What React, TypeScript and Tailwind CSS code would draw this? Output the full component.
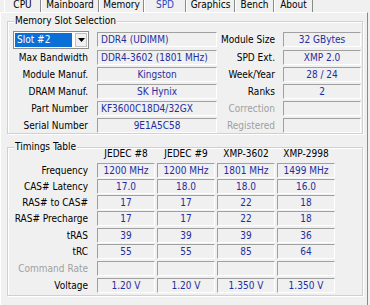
import React from "react";

const FONT = "font-['DejaVu_Sans_Condensed','DejaVu_Sans',sans-serif] text-[10px]";
const VAL = "text-[#1f2e9e]";

const tabs = [
  { name: "CPU", w: "w-[37px]" },
  { name: "Mainboard", w: "w-[58px]" },
  { name: "Memory", w: "w-[45px]" },
  { name: "SPD", w: "w-[42px]", active: true },
  { name: "Graphics", w: "w-[49px]" },
  { name: "Bench", w: "w-[39px]" },
  { name: "About", w: "w-[39px]" },
];

function Field({
  children,
  className = "",
  left = false,
}: {
  children?: React.ReactNode;
  className?: string;
  left?: boolean;
}) {
  return (
    <div
      className={`h-[15px] shrink-0 border border-t-[#a0a0a0] border-l-[#a0a0a0] border-b-white border-r-white leading-[13px] whitespace-nowrap overflow-hidden ${VAL} ${
        left ? "text-left pl-[3px]" : "text-center"
      } ${className}`}
    >
      {children}
    </div>
  );
}

function Group({
  title,
  className = "",
  children,
}: {
  title: string;
  className?: string;
  children: React.ReactNode;
}) {
  return (
    <div
      className={`relative w-[356px] border border-[#d0d0d0] shadow-[1px_1px_0_#fff,inset_1px_1px_0_#fff] ${className}`}
    >
      <span className="absolute left-[6px] -top-[7px] bg-[#f0f0f0] px-[1px] leading-[12px] text-black">
        {title}
      </span>
      {children}
    </div>
  );
}

const slotRows: [string, string, boolean, string, string, boolean][] = [
  ["Max Bandwidth", "DDR4-3602 (1801 MHz)", true, "SPD Ext.", "XMP 2.0", false],
  ["Module Manuf.", "Kingston", false, "Week/Year", "28 / 24", false],
  ["DRAM Manuf.", "SK Hynix", false, "Ranks", "2", false],
  ["Part Number", "KF3600C18D4/32GX", true, "Correction", "", true],
  ["Serial Number", "9E1A5C58", false, "Registered", "", true],
];

const timings: { label: string; vals: string[]; dim?: boolean; mt?: string }[] = [
  { label: "Frequency", vals: ["1200 MHz", "1200 MHz", "1801 MHz", "1499 MHz"] },
  { label: "CAS# Latency", vals: ["17.0", "18.0", "18.0", "16.0"] },
  { label: "RAS# to CAS#", vals: ["17", "17", "22", "18"] },
  { label: "RAS# Precharge", vals: ["17", "17", "22", "18"] },
  { label: "tRAS", vals: ["39", "39", "39", "36"], mt: "mt-[1px]" },
  { label: "tRC", vals: ["55", "55", "85", "64"] },
  { label: "Command Rate", vals: ["", "", "", ""], dim: true, mt: "mt-[1px]" },
  { label: "Voltage", vals: ["1.20 V", "1.20 V", "1.350 V", "1.350 V"], mt: "mt-[1px]" },
];

export default function App() {
  return (
    <div className={`w-[370px] h-[305px] overflow-hidden bg-[#f0f0f0] text-black ${FONT}`}>
      {/* tab strip */}
      <div className="flex h-[12px] overflow-hidden">
        <div className="w-[4px] shrink-0" />
        {tabs.map((t) => (
          <div
            key={t.name}
            className={`${t.w} shrink-0 h-[12px] leading-[10px] text-center border-l border-l-white border-r border-r-[#8a8a8a] ${
              t.active ? "text-[#2a48bf]" : ""
            }`}
          >
            {t.name}
          </div>
        ))}
      </div>

      {/* tab panel */}
      <div className="w-[368px] h-[293px] border-t border-t-white border-l border-l-white border-r border-r-[#8a8a8a] pl-[6px] pt-[8px]">
        <Group title="Memory Slot Selection">
          <div className="pt-[9px] flex flex-col">
            {/* first row */}
            <div className="flex items-start h-[18px]">
              <div className="ml-[5px] w-[76px] h-[18px] shrink-0 bg-white border border-[#8c8c8c] flex items-center p-[1px]">
                <div className="w-[57px] h-[14px] bg-[#0a6fd6] text-white leading-[14px] pl-[2px]">
                  Slot #2
                </div>
                <div className="ml-[3px] w-[12px] h-[14px] flex items-center justify-center border border-[#c0c0c0] bg-[#f0f0f0]">
                  <svg width="7" height="4" viewBox="0 0 7 4">
                    <path d="M0 0h7L3.5 4z" fill="#000" />
                  </svg>
                </div>
              </div>
              <Field left className="ml-[8px] mt-[1px] w-[120px]">
                DDR4 (UDIMM)
              </Field>
              <div className="w-[58px] shrink-0 text-right leading-[15px] mt-[1px]">Module Size</div>
              <Field className="ml-[8px] mt-[1px] w-[78px]">32 GBytes</Field>
            </div>
            <div className="flex flex-col gap-[2px] mt-[1px]">
              {slotRows.map(([l, v, la, r, rv, dim]) => (
                <div key={l} className="flex h-[15px]">
                  <div className="w-[80px] shrink-0 text-right leading-[15px] whitespace-nowrap">{l}</div>
                  <Field left={la} className="ml-[9px] w-[120px]">
                    {v}
                  </Field>
                  <div
                    className={`w-[58px] shrink-0 text-right leading-[15px] whitespace-nowrap ${
                      dim ? "text-[#a0a0a0]" : ""
                    }`}
                  >
                    {r}
                  </div>
                  <Field className="ml-[8px] w-[78px]">{rv}</Field>
                </div>
              ))}
            </div>
          </div>
        </Group>

        <Group title="Timings Table" className="mt-[13px]">
          <div className="flex flex-col pb-[2px]">
            <div className="flex h-[12px] leading-[12px]">
              <div className="w-[89px] shrink-0" />
              <div className="flex gap-[2px]">
                {["JEDEC #8", "JEDEC #9", "XMP-3602", "XMP-2998"].map((h) => (
                  <div key={h} className="w-[58px] text-center whitespace-nowrap">
                    {h}
                  </div>
                ))}
              </div>
            </div>
            <div className="flex flex-col gap-[1px] mt-[3px]">
              {timings.map((r) => (
                <div key={r.label} className={`flex h-[15px] ${r.mt ?? ""}`}>
                  <div
                    className={`w-[80px] shrink-0 text-right leading-[15px] whitespace-nowrap ${
                      r.dim ? "text-[#a0a0a0]" : ""
                    }`}
                  >
                    {r.label}
                  </div>
                  <div className="ml-[9px] flex gap-[2px]">
                    {r.vals.map((v, i) => (
                      <Field key={i} className="w-[58px]">
                        {v}
                      </Field>
                    ))}
                  </div>
                </div>
              ))}
            </div>
          </div>
        </Group>
      </div>
    </div>
  );
}
